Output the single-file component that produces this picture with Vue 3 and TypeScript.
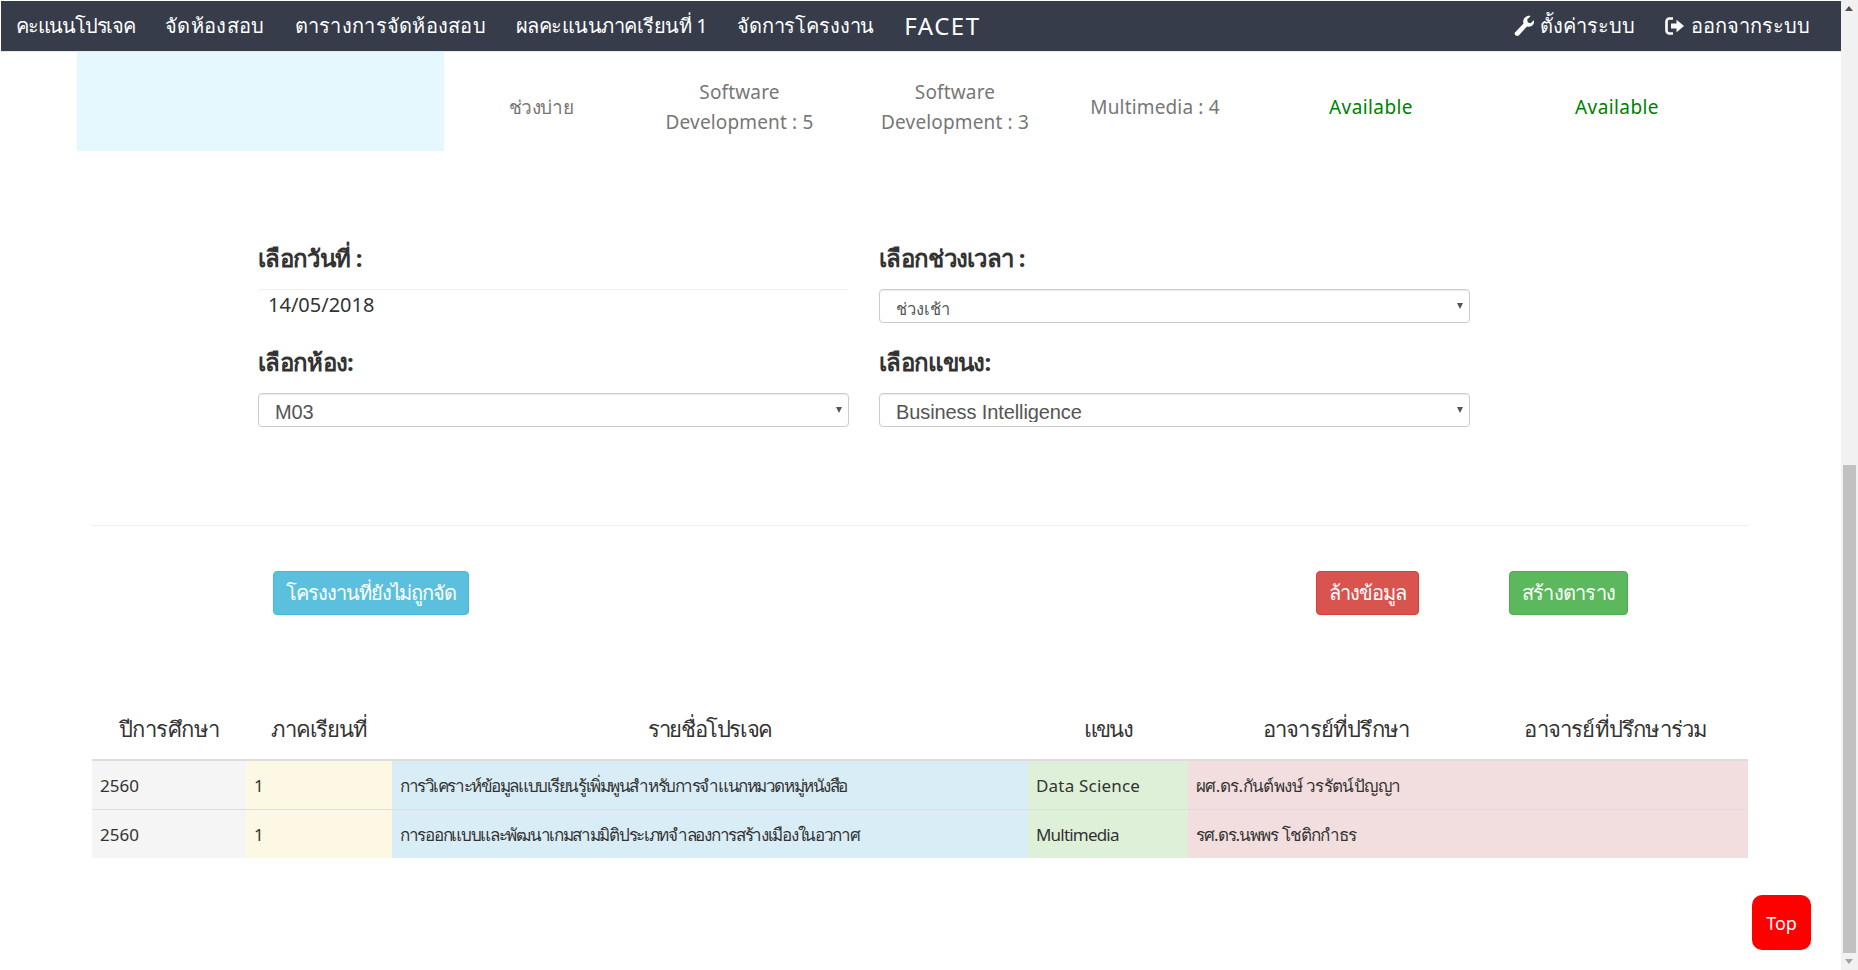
<template>
  <div class="page">
    <div class="main">
      <nav class="navbar">
        <div class="nav-left">
          <a
            v-for="item in navItems"
            :key="item.text"
            class="nav-link"
            :style="{ letterSpacing: item.spacing + 'px' }"
          >{{ item.text }}</a>
          <a class="nav-link facet">FACET</a>
        </div>
        <div class="nav-right">
          <a class="nav-link">
            <svg class="nav-icon" viewBox="0 0 20 22" width="20" height="22">
              <path d="M2 20.500a1.900 1.900 0 0 1-1-3L9.500 8.600C8.600 5.800 9.700 2.500 13 1.200c1.300-.5 2.600-.5 3.600-.1l-3.400 3.500.6 3 2.900.7 3.300-3.400c.4 1.300.2 2.800-.5 4-1.400 2.400-4 3.300-6.500 2.500L5 20.200c-.8.800-2.100 1-3 .3z" fill="#fff" />
            </svg>
            ตั้งค่าระบบ
          </a>
          <a class="nav-link">
            <svg class="nav-icon" viewBox="0 0 20 18" width="20" height="18">
              <path d="M8 1.500H4.500A3 3 0 0 0 1.500 4.500v9a3 3 0 0 0 3 3H8" fill="none" stroke="#fff" stroke-width="2.600" />
              <path d="M6 6.500h5.500V2.800L19 9l-7.500 6.200v-3.700H6z" fill="#fff" />
            </svg>
            ออกจากระบบ
          </a>
        </div>
      </nav>

      <div class="slot-row">
        <div class="slot-box"></div>
        <div class="slot-cell thai">ช่วงบ่าย</div>
        <div class="slot-cell">Software<br />Development : 5</div>
        <div class="slot-cell">Software<br />Development : 3</div>
        <div class="slot-cell">Multimedia : 4</div>
        <div class="slot-cell free">Available</div>
        <div class="slot-cell free">Available</div>
      </div>

      <form class="filters">
        <div class="field">
          <label>เลือกวันที่ :</label>
          <div class="date-input">14/05/2018</div>
        </div>
        <div class="field">
          <label>เลือกช่วงเวลา :</label>
          <div class="select"><span class="select-text thai-value">ช่วงเช้า</span></div>
        </div>
        <div class="field">
          <label>เลือกห้อง:</label>
          <div class="select"><span class="select-text">M03</span></div>
        </div>
        <div class="field">
          <label>เลือกแขนง:</label>
          <div class="select"><span class="select-text">Business Intelligence</span></div>
        </div>
      </form>

      <hr class="divider" />

      <div class="actions">
        <button type="button" class="btn btn-info">โครงงานที่ยังไม่ถูกจัด</button>
        <div class="actions-right">
          <button type="button" class="btn btn-danger">ล้างข้อมูล</button>
          <button type="button" class="btn btn-success">สร้างตาราง</button>
        </div>
      </div>

      <table class="projects">
        <colgroup>
          <col v-for="col in columns" :key="col.text" :style="{ width: col.width + 'px' }" />
        </colgroup>
        <thead>
          <tr>
            <th
              v-for="col in columns"
              :key="col.text"
              :style="{ letterSpacing: col.spacing + 'px' }"
            >{{ col.text }}</th>
          </tr>
        </thead>
        <tbody>
          <tr v-for="row in rows" :key="row.title">
            <td class="c-year">{{ row.year }}</td>
            <td class="c-term">{{ row.term }}</td>
            <td class="c-title" :style="{ letterSpacing: row.titleSpacing + 'px' }">{{ row.title }}</td>
            <td class="c-major" :style="{ letterSpacing: row.majorSpacing + 'px' }">{{ row.major }}</td>
            <td class="c-advisor" :style="{ letterSpacing: row.advisorSpacing + 'px' }">{{ row.advisor }}</td>
            <td class="c-advisor"></td>
          </tr>
        </tbody>
      </table>

      <a class="top-btn">Top</a>
    </div>

    <div class="scrollbar">
      <div class="arrow up"></div>
      <div class="track"><div class="thumb"></div></div>
      <div class="arrow down"></div>
    </div>
  </div>
</template>

<script setup lang="ts">
const navItems = [
  { text: 'คะแนนโปรเจค', spacing: -1.2 },
  { text: 'จัดห้องสอบ', spacing: 0.35 },
  { text: 'ตารางการจัดห้องสอบ', spacing: 0.27 },
  { text: 'ผลคะแนนภาคเรียนที่ 1', spacing: -0.5 },
  { text: 'จัดการโครงงาน', spacing: -0.15 },
]

const columns = [
  { text: 'ปีการศึกษา', width: 154, spacing: -0.5 },
  { text: 'ภาคเรียนที่', width: 146, spacing: -1.1 },
  { text: 'รายชื่อโปรเจค', width: 636, spacing: -1.4 },
  { text: 'แขนง', width: 160, spacing: -1.9 },
  { text: 'อาจารย์ที่ปรึกษา', width: 296, spacing: -0.8 },
  { text: 'อาจารย์ที่ปรึกษาร่วม', width: 264, spacing: -0.8 },
]

const rows = [
  {
    year: '2560',
    term: '1',
    title: 'การวิเคราะห์ข้อมูลแบบเรียนรู้เพิ่มพูนสำหรับการจำแนกหมวดหมู่หนังสือ',
    titleSpacing: -1.43,
    major: 'Data Science',
    majorSpacing: 0.2,
    advisor: 'ผศ.ดร.กันต์พงษ์ วรรัตน์ปัญญา',
    advisorSpacing: -0.6,
  },
  {
    year: '2560',
    term: '1',
    title: 'การออกแบบและพัฒนาเกมสามมิติประเภทจำลองการสร้างเมืองในอวกาศ',
    titleSpacing: -1.3,
    major: 'Multimedia',
    majorSpacing: -0.8,
    advisor: 'รศ.ดร.นพพร โชติกกำธร',
    advisorSpacing: -1,
  },
]
</script>

<style>
html,
body {
  margin: 0;
  height: 970px;
  overflow: hidden;
  background: #fff;
}
</style>

<style scoped>
.page {
  display: flex;
  height: 970px;
  font-family: "Noto Sans", "Liberation Sans", sans-serif;
  color: #333;
}

.main {
  position: relative;
  flex: 1;
  min-width: 0;
}

.navbar {
  display: flex;
  justify-content: space-between;
  align-items: center;
  box-sizing: border-box;
  height: 51px;
  margin: 1px 0 0 1px;
  padding: 0 31px 0 15px;
  background: #373c4a;
  border-bottom: 1px solid #e7e7e7;
}

.nav-left,
.nav-right {
  display: flex;
  gap: 30px;
}

.nav-link {
  display: flex;
  align-items: center;
  gap: 6px;
  color: #fff;
  font-size: 20px;
  white-space: nowrap;
}

.facet {
  margin-top: -2px;
  font-size: 24px;
  letter-spacing: 1.5px;
}

.nav-icon {
  flex: none;
}

.slot-row {
  display: grid;
  grid-template-columns: 367px 194px 203px 228px 172px 260px 232px;
  height: 99px;
  margin-left: 77px;
  color: #777;
  font-size: 19px;
  letter-spacing: 0.15px;
  line-height: 30px;
  text-align: center;
}

.slot-box {
  background: #e5f8fe;
}

.slot-cell {
  align-self: center;
  margin-top: 10px;
}

.slot-cell.thai {
  letter-spacing: -0.4px;
}

.slot-cell.free {
  color: #008000;
  letter-spacing: 0.4px;
}

.filters {
  display: grid;
  grid-template-columns: 591px 591px;
  column-gap: 30px;
  row-gap: 19px;
  margin: 87px 0 0 258px;
}

.field label {
  display: block;
  height: 40px;
  margin-bottom: 11px;
  font-size: 24px;
  font-weight: 700;
  letter-spacing: -0.7px;
  line-height: 40px;
}

.date-input {
  box-sizing: border-box;
  height: 34px;
  padding: 0 10px;
  border-top: 1px solid #eee;
  border-radius: 4px;
  font-size: 20px;
  line-height: 30px;
}

.select {
  position: relative;
  box-sizing: border-box;
  height: 34px;
  padding: 6px 16px 0;
  border: 1px solid #ccc;
  border-radius: 4px;
  box-shadow: inset 0 1px 1px rgba(0, 0, 0, 0.075);
  color: #555;
  font-family: "Liberation Sans", sans-serif;
  font-size: 20px;
  letter-spacing: -0.1px;
}

.select-text {
  display: block;
  height: 22px;
  overflow: hidden;
  line-height: 24px;
}

.thai-value {
  height: 26px;
  font-size: 16.5px;
  line-height: 26px;
}

.select::after {
  content: "";
  position: absolute;
  top: 13px;
  right: 6px;
  border: 3.5px solid transparent;
  border-top: 6px solid #555;
  border-bottom: 0;
}

.divider {
  height: 1px;
  margin: 98px 93px 0 92px;
  border: 0;
  background: #eee;
}

.actions {
  display: flex;
  justify-content: space-between;
  margin: 45px 213px 0 273px;
}

.actions-right {
  display: flex;
  gap: 90px;
}

.btn {
  box-sizing: border-box;
  height: 44px;
  padding: 0 12px;
  border: 1px solid;
  border-radius: 4px;
  color: #fff;
  font-family: inherit;
  font-size: 20px;
  letter-spacing: -0.75px;
}

.btn-info {
  background: #5bc0de;
  border-color: #46b8da;
  letter-spacing: -1.05px;
}

.btn-danger {
  background: #d9534f;
  border-color: #d43f3a;
  letter-spacing: -1px;
}

.btn-success {
  background: #5cb85c;
  border-color: #4cae4c;
}

.projects {
  width: 1656px;
  margin: 84px 0 0 92px;
  border-collapse: collapse;
  table-layout: fixed;
}

.projects th {
  height: 60px;
  padding: 0;
  border-bottom: 2px solid #ddd;
  font-size: 22px;
  font-weight: 400;
  text-align: center;
}

.projects td {
  height: 48px;
  padding: 0 8px;
  border-top: 1px solid #ddd;
  font-size: 17px;
}

.c-year {
  background: #f5f5f5;
}

.c-term {
  background: #fcf8e3;
}

.c-title {
  background: #d9edf7;
}

.c-major {
  background: #dff0d8;
}

.c-advisor {
  background: #f2dede;
}

.top-btn {
  position: absolute;
  top: 895px;
  left: 1752px;
  display: flex;
  align-items: center;
  justify-content: center;
  width: 59px;
  height: 55px;
  border-radius: 10px;
  background: #f00;
  color: #fff;
  font-size: 18px;
}

.scrollbar {
  display: flex;
  flex-direction: column;
  flex: none;
  width: 17px;
  background: #f1f1f1;
}

.arrow {
  position: relative;
  flex: none;
  height: 17px;
}

.arrow::after {
  content: "";
  position: absolute;
  left: 4px;
  border: 4px solid transparent;
}

.arrow.up::after {
  top: 2px;
  border-bottom: 5px solid #505050;
}

.arrow.down::after {
  bottom: 2px;
  border-top: 5px solid #a3a3a3;
}

.track {
  flex: 1;
  padding-top: 448px;
}

.thumb {
  height: 488px;
  margin: 0 2px;
  background: #c1c1c1;
}
</style>
